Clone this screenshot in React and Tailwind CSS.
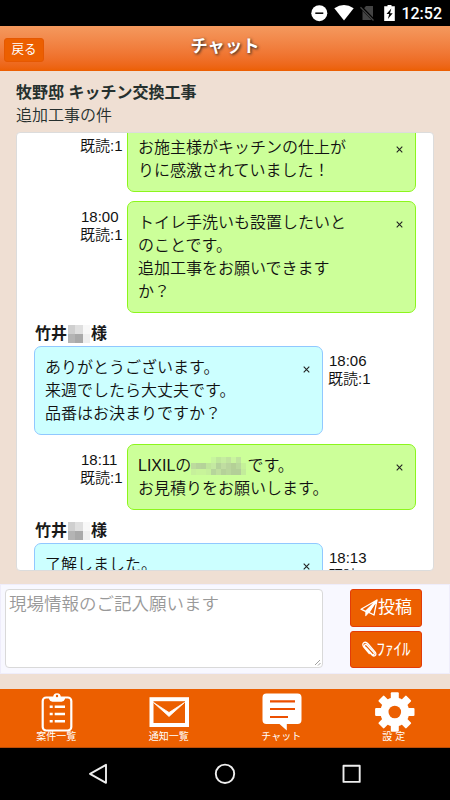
import React from 'react';

const JP = "font-['Liberation_Sans','Noto_Sans_CJK_JP',sans-serif]";

function Mosaic({ width, height, cols, colors, className }) {
  const cw = width / cols;
  const ch = height / (colors.length / cols);
  return (
    <svg width={width} height={height} className={className} shapeRendering="crispEdges">
      {colors.map((c, i) => (
        <rect key={i} x={(i % cols) * cw} y={Math.floor(i / cols) * ch} width={cw} height={ch} fill={c} />
      ))}
    </svg>
  );
}

function Meta({ time, className }) {
  return (
    <div className={`text-[15px] leading-[18px] font-[350] text-[#111] whitespace-nowrap ${className}`}>
      {time && <div>{time}</div>}
      <div className="-ml-px">既読:1</div>
    </div>
  );
}

function Cross() {
  return (
    <svg width="7" height="7" viewBox="0 0 7 7" className="mt-[10px] mr-[12px] shrink-0" stroke="#222" strokeWidth="1.1">
      <path d="M.7.7l5.6 5.6M6.3.7L.7 6.3" />
    </svg>
  );
}

function Mine({ time, lines, className = '', metaClass = 'pt-[7px]' }) {
  return (
    <div className={`flex ${className}`}>
      <Meta time={time} className={`ml-[64px] w-[46px] shrink-0 ${metaClass}`} />
      <div className="flex w-[289px] justify-between rounded-[7px] border border-[#8cf61c] bg-[#ccff99] py-[9px] pl-[10px] text-[16px] leading-[23px] font-[350] text-[#111]">
        <div className="whitespace-nowrap">{lines.map((l, i) => <div key={i} className="h-[23px]">{l}</div>)}</div>
        <Cross />
      </div>
    </div>
  );
}

function Theirs({ time, lines, className = '' }) {
  return (
    <div className={className}>
      <div className="ml-[18px] flex h-[24px] items-center text-[16px] leading-[24px] font-bold text-[#1a1a1a]">
        <span>竹井</span>
        <Mosaic width={22} height={18} cols={3} className="mr-px ml-px" colors={['#cfcfcf', '#dfdfdf', '#f8f8f8', '#b4b4b4', '#a9a9a9', '#efefef']} />
        <span>様</span>
      </div>
      <div className="flex">
        <div className="ml-[17px] flex w-[289px] shrink-0 justify-between rounded-[7px] border border-[#91c8ff] bg-[#ccffff] py-[9px] pl-[10px] text-[16px] leading-[23px] font-[350] text-[#111]">
          <div className="whitespace-nowrap">{lines.map((l, i) => <div key={i} className="h-[23px]">{l}</div>)}</div>
          <Cross />
        </div>
        <Meta time={time} className="ml-[6px] pt-[6px]" />
      </div>
    </div>
  );
}

function StatusBar() {
  return (
    <div className="flex h-[26px] shrink-0 items-center justify-end bg-black pr-[8px]">
      <svg width="96" height="26" viewBox="0 0 96 26" className="-mr-px">
        <circle cx="13.3" cy="13.2" r="8" fill="#fff" />
        <path d="M9.3 13.2h8" stroke="#000" strokeWidth="1.5" />
        <path d="M28.3 8.2Q38 1.8 47.700 8.200L38 20.400z" fill="#fff" />
        <path d="M60 6h7v14H56.500V10z" fill="#444" />
        <path d="M54 6l14 14.500" stroke="#000" strokeWidth="3" />
        <path d="M54.500 7.300l13 13.200" stroke="#444" strokeWidth="1.300" />
        <path d="M81.500 5h4v1.300h3.300V21H78.200V6.300h3.300z" fill="#fff" />
        <path d="M85.300 8.500l-4.800 5.600h2.700l-1.300 4.800 4.800-5.700H84z" fill="#000" />
      </svg>
      <span className="pt-[2px] font-['Roboto',sans-serif] text-[16px] leading-[24px] font-medium text-white">12:52</span>
    </div>
  );
}

function Tab({ label, children }) {
  return (
    <div className="flex flex-1 flex-col items-center">
      <svg width="42" height="42" viewBox="0 0 42 42" className="mt-[2px] ml-px shrink-0">{children}</svg>
      <span className="-mt-[2px] text-[10px] leading-[11px] text-white">{label}</span>
    </div>
  );
}

const blurred = ['#ccff99', '#ccff99', '#ccff99', '#ccff99', '#c7f59d', '#bfe79b', '#c5ed9f', '#c0e39e', '#c9f59d', '#bfe39d', '#ccff99',
  '#bddb9d', '#b7d49b', '#b5d399', '#bfe69b', '#c4e9a1', '#b4d39a', '#c0dda1', '#b9d59d', '#b4d096', '#b9d99c', '#c5f298',
  '#c6f09b', '#c8f49a', '#c8f49a', '#c5ef9b', '#b6d59b', '#bfdf9e', '#b5d199', '#b9d79b', '#b3cf98', '#b3cf98', '#c2ec9a'];

export default function App() {
  return (
    <div className={`flex h-[800px] w-[450px] flex-col overflow-hidden bg-[#efdfd3] ${JP}`}>
      <StatusBar />
      <header className="grid h-[45px] shrink-0 grid-cols-[1fr_auto_1fr] bg-linear-to-b from-[#f4995e] to-[#ec5f00]">
        <button className="mt-[12px] ml-[4px] h-[24px] w-[40px] rounded-[3px] border border-[#e65800] bg-[#ec5f00] text-[12.500px] leading-[23px] text-white">戻る</button>
        <h1 className="text-[17.300px] leading-[41px] font-bold text-white [text-shadow:1px_1px_3px_#222]">チャット</h1>
      </header>
      <div className="h-[61px] shrink-0 pt-[10px] pl-[16px] text-[16px] leading-[23px] text-[#26302e]">
        <div className="font-bold">牧野邸 キッチン交換工事</div>
        <div className="font-[350]">追加工事の件</div>
      </div>
      <main className="mx-[16px] h-[439px] shrink-0 overflow-hidden rounded-[4px] border border-[#dcdcdc] bg-white">
        <Mine className="-mt-[7px]" metaClass="pt-[11px]" lines={['お施主様がキッチンの仕上が', 'りに感激されていました！']} />
        <Mine time="18:00" className="mt-[9px]" lines={['トイレ手洗いも設置したいと', 'のことです。', '追加工事をお願いできます', 'か？']} />
        <Theirs time="18:06" className="mt-[9px]" lines={['ありがとうございます。', '来週でしたら大丈夫です。', '品番はお決まりですか？']} />
        <Mine
          time="18:11"
          className="mt-[9px]"
          lines={[
            <span className="flex items-center">LIXILの<Mosaic width={55} height={18} cols={11} colors={blurred} className="mr-px" />です。</span>,
            'お見積りをお願いします。',
          ]}
        />
        <Theirs time="18:13" className="mt-[9px]" lines={['了解しました。', '']} />
      </main>
      <section className="mt-[13px] flex h-[90px] shrink-0 border border-[#efedfb] bg-[#f8f8ff]">
        <div className="mt-[4px] ml-[4px] flex h-[79px] w-[318px] items-end rounded-[4px] border border-[#d9d9d9] bg-white">
          <div className="flex-1 self-start pt-[1px] pl-[3px] text-[17.500px] leading-[26px] font-[350] text-[#999]">現場情報のご記入願います</div>
          <svg width="6" height="6" viewBox="0 0 6 6" className="m-px" stroke="#888" strokeWidth=".8"><path d="M0 5L5 0M3 5.500L5.500 3" /></svg>
        </div>
        <div className="mt-[4px] ml-[27px] flex flex-col gap-[4px]">
          <button className="flex h-[38px] w-[72px] items-center justify-center rounded-[3px] border border-[#e33b08] bg-[#ec5f00] text-[17px] text-white">
            <svg width="18" height="18" viewBox="0 0 18 18" fill="none" stroke="#fff" strokeWidth="1.300" strokeLinejoin="round">
              <path d="M17 1L1 10.200l4.500 2.200L17 1l-3 15-5-2.600L17 1" />
              <path d="M5.600 12.300v4.800L9 13.400 16.500 1.800z" fill="#fff" strokeWidth=".6" />
            </svg>
            <span>投稿</span>
          </button>
          <button className="flex h-[37px] w-[72px] items-center justify-center rounded-[3px] border border-[#e33b08] bg-[#ec5f00] text-[17px] text-white">
            <svg width="15" height="17" viewBox="0 0 15 17" fill="none" stroke="#fff" strokeWidth="1.300" strokeLinecap="round">
              <path d="M4 6.800l6 6.400c1.300 1.300 3-.3 1.900-1.600L5.200 4.200C3.400 2.300 1.600 4 3.200 6.100l6.300 7.500c2.600 3 6 .2 3.500-2.800L6.200 3C3-.7-1.100 2.400 1.800 6l5.500 6.500" />
            </svg>
            <span>ﾌｧｲﾙ</span>
          </button>
        </div>
      </section>
      <nav className="mt-[15px] flex h-[59px] shrink-0 border-b border-[#b84c08] bg-[#ec5f00]">
        <Tab label="案件一覧">
          <rect x="6.700" y="6.500" width="28.600" height="33" rx="3.500" fill="none" stroke="#fff" strokeWidth="2.200" />
          <path d="M13 6h4.200a3.800 3.800 0 0 1 7.600 0H29v2q-1 2.800-3.500 2.800h-9Q14 10.800 13 8z" fill="#fff" />
          <circle cx="21" cy="5" r="1.200" fill="#ec5f00" />
          <path d="M13.700 15.700h3m2 0H29M13.700 23h3m2 0H29M13.700 30.300h3m2 0H29" stroke="#fff" strokeWidth="2.400" />
        </Tab>
        <Tab label="通知一覧">
          <rect x="3.500" y="8.200" width="35.500" height="25.800" fill="none" stroke="#fff" strokeWidth="4" />
          <path d="M5.500 11.500L21 21.500l15.500-10L21 25.500z" fill="#fff" stroke="#fff" strokeWidth=".8" />
        </Tab>
        <Tab label="チャット">
          <path d="M5.500 2.500h31q4 0 4 4V29q0 4-4 4H25.800v6.500L18.500 33h-13q-4 0-4-4V6.500q0-4 4-4z" fill="#fff" />
          <path d="M9 10.300h25M9 18h25M9 26H27" stroke="#ec4f00" strokeWidth="2.200" />
        </Tab>
        <Tab label="設 定">
          <g transform="translate(.8 0)">
            <g fill="#fff">
              <circle cx="21" cy="21" r="14.500" />
              <rect x="17" y="1.300" width="8" height="39.400" rx="1" />
              <rect x="17" y="1.300" width="8" height="39.400" rx="1" transform="rotate(45 21 21)" />
              <rect x="17" y="1.300" width="8" height="39.400" rx="1" transform="rotate(90 21 21)" />
              <rect x="17" y="1.300" width="8" height="39.400" rx="1" transform="rotate(135 21 21)" />
            </g>
            <circle cx="21" cy="21" r="6.300" fill="#ec5f00" />
          </g>
        </Tab>
      </nav>
      <footer className="flex h-[52px] shrink-0 items-center justify-center gap-[103px] bg-black">
        <svg width="24" height="24" viewBox="0 0 24 24" fill="none" stroke="#eee" strokeWidth="1.900" strokeLinejoin="round"><path d="M20 2.800v18L4 11.800z" /></svg>
        <svg width="24" height="24" viewBox="0 0 24 24" fill="none" stroke="#eee" strokeWidth="1.900"><circle cx="12" cy="11.800" r="9.200" /></svg>
        <svg width="24" height="24" viewBox="0 0 24 24" fill="none" stroke="#eee" strokeWidth="1.900" strokeLinejoin="round"><rect x="3.500" y="3.700" width="16.200" height="16.200" /></svg>
      </footer>
    </div>
  );
}
